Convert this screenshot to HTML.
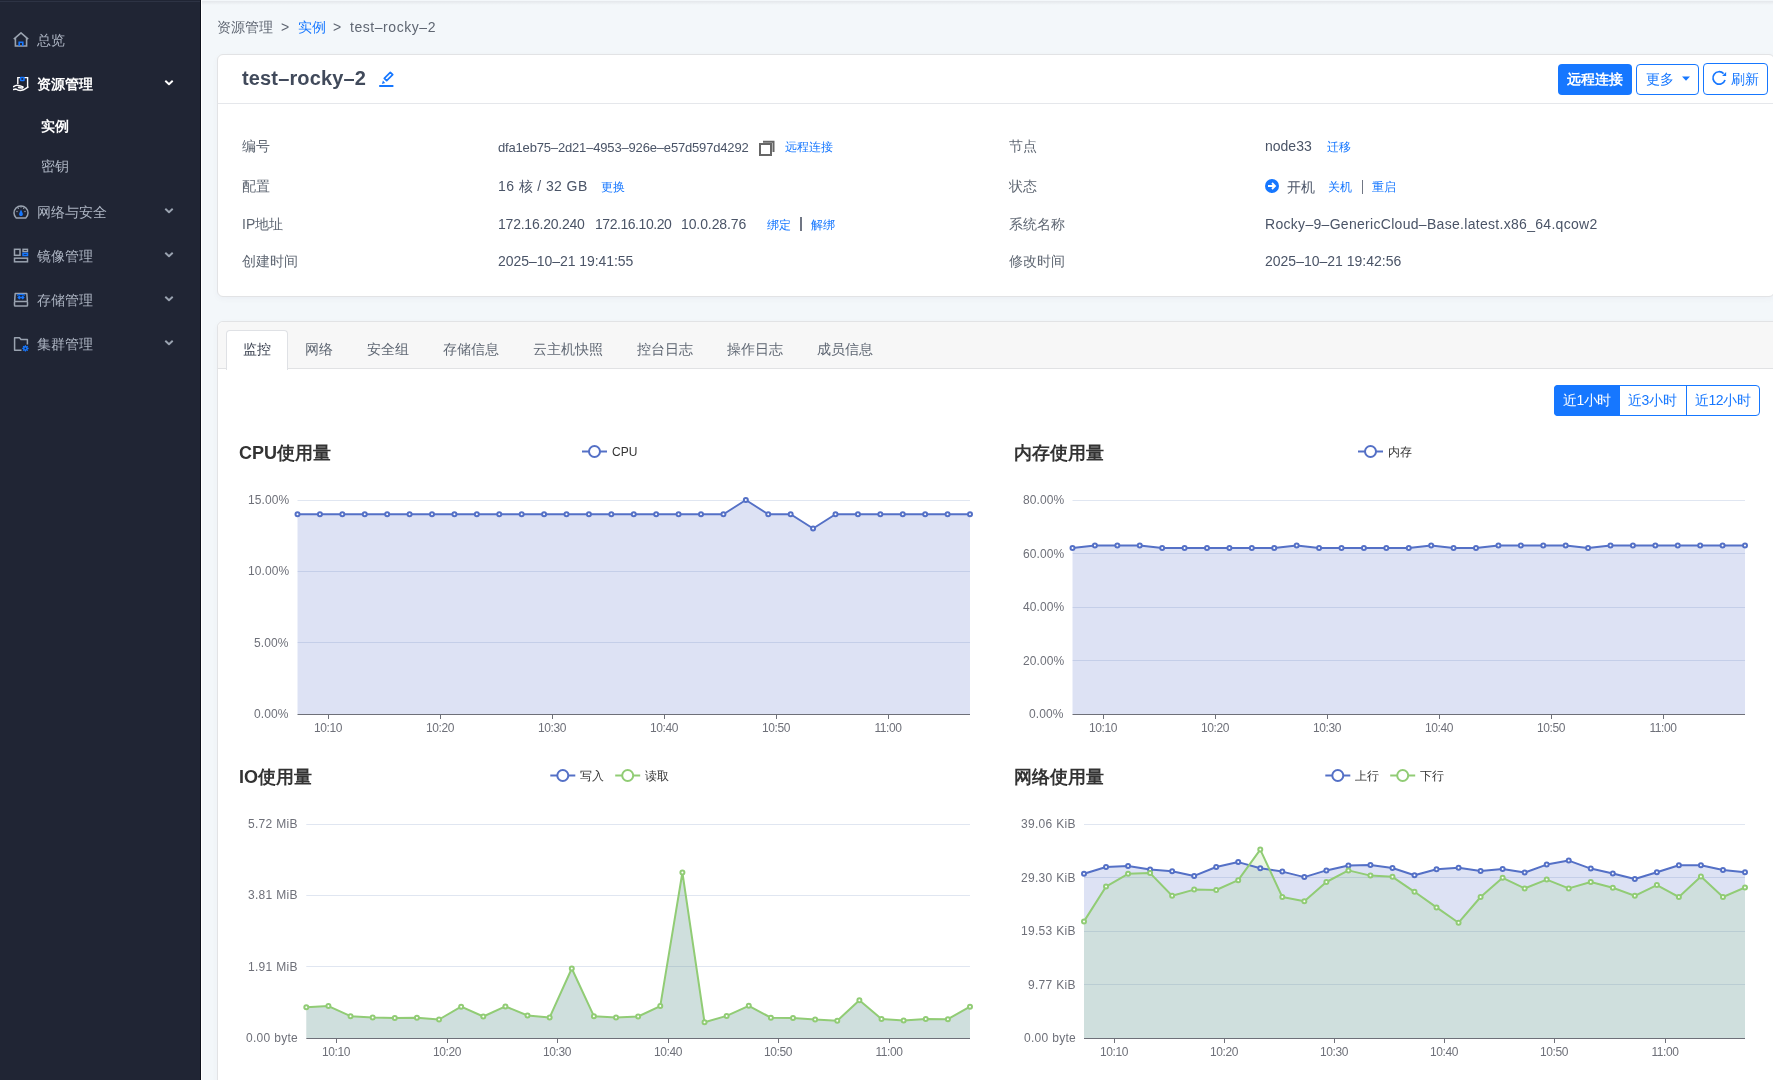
<!DOCTYPE html>
<html><head><meta charset="utf-8"><title>test-rocky-2</title>
<style>
html,body{margin:0;padding:0;width:1773px;height:1080px;overflow:hidden;background:#f3f7fa;font-family:"Liberation Sans", sans-serif;}
.t{position:absolute;white-space:nowrap;will-change:transform;}
#sb{position:absolute;left:0;top:0;width:200px;height:1080px;background:#202534;}
.card{position:absolute;background:#fff;border:1px solid #e2e3e5;border-radius:6px;box-sizing:border-box;box-shadow:0 2px 6px rgba(20,40,80,0.035);}
.btn{position:absolute;}
</style></head><body>
<div id="sb"></div>
<div style="position:absolute;left:0;top:1px;width:200px;height:1px;background:#2d3344"></div>
<div style="position:absolute;left:200px;top:0;width:1px;height:1080px;background:#0d111c"></div>
<div style="position:absolute;left:201px;top:0;width:1px;height:1080px;background:#ffffff"></div>
<svg style="position:absolute;left:13px;top:32px" width="16" height="16" viewBox="0 0 16 16"><path d="M0.8 7.2 L8 0.9 L15.2 7.2" fill="none" stroke="#9aa3b0" stroke-width="1.6" stroke-linejoin="miter"/><path d="M2.4 6 V14 H13.6 V6" fill="none" stroke="#9aa3b0" stroke-width="1.6"/><path d="M6.2 14 V10.2 H9.8 V14" fill="none" stroke="#1677ff" stroke-width="1.6"/></svg>
<div class="t" style="left:37px;top:30.00px;font-size:14px;line-height:20px;color:#adb5c3;font-weight:normal;">总览</div>
<svg style="position:absolute;left:13px;top:76px" width="16" height="16" viewBox="0 0 16 16"><path d="M4.8 8 V1.6 H14.6 V11" fill="none" stroke="#ffffff" stroke-width="1.4"/><rect x="6.8" y="0.8" width="5" height="4.4" rx="1.2" fill="#1677ff"/><rect x="8.4" y="2.2" width="1.8" height="1.6" fill="#1f2432"/><path d="M0.6 10.6 C2.5 9.2 4.5 8.8 6.5 9.8 L9.5 10.6 C10.5 11 9.8 12.2 8.5 12 L5.5 11.6 M0.6 13.6 L3 13 C5 14.6 8 14.8 10.5 13.8 L15 11.2" fill="none" stroke="#ffffff" stroke-width="1.5" stroke-linecap="round" stroke-linejoin="round"/></svg>
<div class="t" style="left:37px;top:74.00px;font-size:14px;line-height:20px;color:#ffffff;font-weight:bold;">资源管理</div>
<svg style="position:absolute;left:164px;top:79px" width="10" height="8" viewBox="0 0 10 8"><path d="M1.3 1.8 L5 5.3 L8.7 1.8" fill="none" stroke="#ffffff" stroke-width="1.9" stroke-linejoin="round"/></svg>
<svg style="position:absolute;left:13px;top:204px" width="16" height="16" viewBox="0 0 16 16"><path d="M3.2 14 A7 7 0 1 1 12.8 14 Z" fill="none" stroke="#9aa3b0" stroke-width="1.5" stroke-linejoin="round"/><path d="M8 5.6 L9.7 9.3 A1.9 1.9 0 1 1 6.3 9.3 Z" fill="#1677ff"/><circle cx="4" cy="7.5" r="0.7" fill="#9aa3b0"/><circle cx="12" cy="7.5" r="0.7" fill="#9aa3b0"/><circle cx="5.3" cy="4.2" r="0.7" fill="#9aa3b0"/><circle cx="10.7" cy="4.2" r="0.7" fill="#9aa3b0"/><circle cx="8" cy="3" r="0.7" fill="#9aa3b0"/></svg>
<div class="t" style="left:37px;top:202.00px;font-size:14px;line-height:20px;color:#adb5c3;font-weight:normal;">网络与安全</div>
<svg style="position:absolute;left:164px;top:207px" width="10" height="8" viewBox="0 0 10 8"><path d="M1.3 1.8 L5 5.3 L8.7 1.8" fill="none" stroke="#9aa3b0" stroke-width="1.9" stroke-linejoin="round"/></svg>
<svg style="position:absolute;left:13px;top:248px" width="16" height="16" viewBox="0 0 16 16"><rect x="1.5" y="1.3" width="5.5" height="6" fill="none" stroke="#9aa3b0" stroke-width="1.5"/><rect x="1.5" y="10.2" width="13" height="3.6" fill="none" stroke="#9aa3b0" stroke-width="1.5"/><rect x="10" y="1.3" width="4.5" height="2.2" fill="none" stroke="#9aa3b0" stroke-width="1.4"/><rect x="10" y="5.3" width="4.5" height="2.2" fill="none" stroke="#1677ff" stroke-width="1.5"/></svg>
<div class="t" style="left:37px;top:246.00px;font-size:14px;line-height:20px;color:#adb5c3;font-weight:normal;">镜像管理</div>
<svg style="position:absolute;left:164px;top:251px" width="10" height="8" viewBox="0 0 10 8"><path d="M1.3 1.8 L5 5.3 L8.7 1.8" fill="none" stroke="#9aa3b0" stroke-width="1.9" stroke-linejoin="round"/></svg>
<svg style="position:absolute;left:13px;top:292px" width="16" height="16" viewBox="0 0 16 16"><path d="M1.6 9.5 L2.2 1.5 H13.8 L14.4 9.5" fill="none" stroke="#9aa3b0" stroke-width="1.5" stroke-linejoin="round"/><rect x="1.5" y="9.5" width="13" height="4.6" rx="0.8" fill="none" stroke="#9aa3b0" stroke-width="1.5"/><path d="M5.3 5.5 H10.7 M6.8 4 L5.3 5.5 L6.8 7 M9.2 4 L10.7 5.5 L9.2 7" fill="none" stroke="#1677ff" stroke-width="1.4"/><path d="M4 3.2 C6 2.3 10 2.3 12 3.2" fill="none" stroke="#1677ff" stroke-width="1.2"/></svg>
<div class="t" style="left:37px;top:290.00px;font-size:14px;line-height:20px;color:#adb5c3;font-weight:normal;">存储管理</div>
<svg style="position:absolute;left:164px;top:295px" width="10" height="8" viewBox="0 0 10 8"><path d="M1.3 1.8 L5 5.3 L8.7 1.8" fill="none" stroke="#9aa3b0" stroke-width="1.9" stroke-linejoin="round"/></svg>
<svg style="position:absolute;left:13px;top:336px" width="16" height="16" viewBox="0 0 16 16"><path d="M8.5 14.2 H1.6 V1.8 H6.5 L8 3.6 H14.4 V8.5" fill="none" stroke="#9aa3b0" stroke-width="1.5" stroke-linejoin="round"/><circle cx="12.4" cy="12.4" r="2.3" fill="#1677ff"/><circle cx="12.4" cy="12.4" r="0.8" fill="#1f2432"/><path d="M12.4 9.2 V15.6 M9.2 12.4 H15.6 M10.1 10.1 L14.7 14.7 M14.7 10.1 L10.1 14.7" stroke="#1677ff" stroke-width="1.2"/><circle cx="12.4" cy="12.4" r="0.9" fill="#1f2432"/></svg>
<div class="t" style="left:37px;top:334.00px;font-size:14px;line-height:20px;color:#adb5c3;font-weight:normal;">集群管理</div>
<svg style="position:absolute;left:164px;top:339px" width="10" height="8" viewBox="0 0 10 8"><path d="M1.3 1.8 L5 5.3 L8.7 1.8" fill="none" stroke="#9aa3b0" stroke-width="1.9" stroke-linejoin="round"/></svg>
<div class="t" style="left:41px;top:116.00px;font-size:14px;line-height:20px;color:#ffffff;font-weight:bold;">实例</div>
<div class="t" style="left:41px;top:156.00px;font-size:14px;line-height:20px;color:#adb5c3;font-weight:normal;">密钥</div>
<div style="position:absolute;left:202px;top:1px;width:1571px;height:4px;background:linear-gradient(#e4e7eb,#f3f7fa)"></div>
<div class="t" style="left:217.2px;top:17.00px;font-size:14px;line-height:20px;color:#5f6672;font-weight:normal;">资源管理</div>
<div class="t" style="left:281px;top:17.00px;font-size:14px;line-height:20px;color:#5f6672;font-weight:normal;">&gt;</div>
<div class="t" style="left:298px;top:17.00px;font-size:14px;line-height:20px;color:#1677ff;font-weight:normal;">实例</div>
<div class="t" style="left:333px;top:17.00px;font-size:14px;line-height:20px;color:#5f6672;font-weight:normal;">&gt;</div>
<div class="t" style="left:350px;top:17.00px;font-size:14px;line-height:20px;color:#5f6672;font-weight:normal;letter-spacing:0.55px">test–rocky–2</div>
<div class="card" style="left:217px;top:54px;width:1558px;height:243px"></div>
<div style="position:absolute;left:218px;top:103px;width:1555px;height:1px;background:#e5e7eb"></div>
<div class="t" style="left:242px;top:64.00px;font-size:20px;line-height:28px;color:#414a5b;font-weight:bold;letter-spacing:0.15px">test–rocky–2</div>
<svg style="position:absolute;left:378px;top:71px" width="17" height="17" viewBox="0 0 17 17"><polygon points="6.3,7.3 12.3,1.3 14.7,3.7 8.7,9.7" fill="none" stroke="#1677ff" stroke-width="1.7" stroke-linejoin="round"/><path d="M3.9 12.9 L4.9 9.6 L7.2 11.9 Z" fill="#1677ff"/><path d="M1.2 15 H15.4" stroke="#1677ff" stroke-width="2"/></svg>
<div class="btn" style="left:1558px;top:64px;width:74px;height:31px;background:#1677ff;border-radius:4px"></div>
<div class="t" style="left:1567px;top:68.70px;font-size:14px;line-height:20px;color:#fff;font-weight:bold;">远程连接</div>
<div class="btn" style="left:1636px;top:64px;width:61px;height:29px;border:1px solid #1677ff;border-radius:4px"></div>
<div class="t" style="left:1646px;top:68.70px;font-size:14px;line-height:20px;color:#1677ff;font-weight:normal;">更多</div>
<svg style="position:absolute;left:1681px;top:76px" width="10" height="6"><path d="M1 0.5 H9 L5 4.8 Z" fill="#1677ff"/></svg>
<div class="btn" style="left:1703px;top:63px;width:63px;height:30px;border:1px solid #1677ff;border-radius:4px"></div>
<svg style="position:absolute;left:1711px;top:70px" width="17" height="17" viewBox="0 0 17 17"><path d="M14.03 9.92 A6.2 6.2 0 1 1 12.6 3.6" fill="none" stroke="#1677ff" stroke-width="1.7"/><polygon points="15.1,5.9 11.1,5.9 15.1,1.9" fill="#1677ff"/></svg>
<div class="t" style="left:1731px;top:68.70px;font-size:14px;line-height:20px;color:#1677ff;font-weight:normal;">刷新</div>
<div class="t" style="left:242px;top:135.50px;font-size:14px;line-height:20px;color:#5f6773;font-weight:normal;">编号</div>
<div class="t" style="left:242px;top:175.50px;font-size:14px;line-height:20px;color:#5f6773;font-weight:normal;">配置</div>
<div class="t" style="left:242px;top:213.80px;font-size:14px;line-height:20px;color:#5f6773;font-weight:normal;">IP地址</div>
<div class="t" style="left:242px;top:250.50px;font-size:14px;line-height:20px;color:#5f6773;font-weight:normal;">创建时间</div>
<div class="t" style="left:498px;top:137.50px;font-size:13px;line-height:19px;color:#4a5467;font-weight:normal;letter-spacing:-0.17px">dfa1eb75–2d21–4953–926e–e57d597d4292</div>
<svg style="position:absolute;left:758px;top:139px" width="18" height="18" viewBox="0 0 18 18"><rect x="2" y="5" width="11" height="11" fill="none" stroke="#666" stroke-width="2"/><path d="M5 2.8 H15.5 V13" fill="none" stroke="#666" stroke-width="2"/></svg>
<div class="t" style="left:785px;top:138.00px;font-size:12px;line-height:18px;color:#1677ff;font-weight:normal;">远程连接</div>
<div class="t" style="left:498px;top:176.00px;font-size:14px;line-height:20px;color:#4a5467;font-weight:normal;letter-spacing:0.4px">16 核 / 32 GB</div>
<div class="t" style="left:601px;top:177.50px;font-size:12px;line-height:18px;color:#1677ff;font-weight:normal;">更换</div>
<div class="t" style="left:498px;top:214.00px;font-size:14px;line-height:20px;color:#4a5467;font-weight:normal;letter-spacing:-0.22px">172.16.20.240</div>
<div class="t" style="left:594.6px;top:214.00px;font-size:14px;line-height:20px;color:#4a5467;font-weight:normal;letter-spacing:-0.45px">172.16.10.20</div>
<div class="t" style="left:680.5px;top:214.00px;font-size:14px;line-height:20px;color:#4a5467;font-weight:normal;letter-spacing:-0.1px">10.0.28.76</div>
<div class="t" style="left:767px;top:215.50px;font-size:12px;line-height:18px;color:#1677ff;font-weight:normal;">绑定</div>
<div style="position:absolute;left:800px;top:217px;width:1.5px;height:14px;background:#707684"></div>
<div class="t" style="left:811px;top:215.50px;font-size:12px;line-height:18px;color:#1677ff;font-weight:normal;">解绑</div>
<div class="t" style="left:498px;top:251.00px;font-size:14px;line-height:20px;color:#4a5467;font-weight:normal;letter-spacing:-0.05px">2025–10–21 19:41:55</div>
<div class="t" style="left:1009px;top:135.50px;font-size:14px;line-height:20px;color:#5f6773;font-weight:normal;">节点</div>
<div class="t" style="left:1009px;top:175.50px;font-size:14px;line-height:20px;color:#5f6773;font-weight:normal;">状态</div>
<div class="t" style="left:1009px;top:213.50px;font-size:14px;line-height:20px;color:#5f6773;font-weight:normal;">系统名称</div>
<div class="t" style="left:1009px;top:250.50px;font-size:14px;line-height:20px;color:#5f6773;font-weight:normal;">修改时间</div>
<div class="t" style="left:1265px;top:136.00px;font-size:14px;line-height:20px;color:#4a5467;font-weight:normal;">node33</div>
<div class="t" style="left:1327px;top:137.50px;font-size:12px;line-height:18px;color:#1677ff;font-weight:normal;">迁移</div>
<svg style="position:absolute;left:1264px;top:178px" width="16" height="16" viewBox="0 0 16 16"><circle cx="8" cy="8" r="7" fill="#1677ff"/><path d="M4 8 H11 M8 5 L11 8 L8 11" fill="none" stroke="#fff" stroke-width="1.8"/></svg>
<div class="t" style="left:1287px;top:176.50px;font-size:14px;line-height:20px;color:#4a5467;font-weight:normal;">开机</div>
<div class="t" style="left:1328px;top:178.00px;font-size:12px;line-height:18px;color:#1677ff;font-weight:normal;">关机</div>
<div style="position:absolute;left:1361.5px;top:180px;width:1.5px;height:14px;background:#707684"></div>
<div class="t" style="left:1372px;top:178.00px;font-size:12px;line-height:18px;color:#1677ff;font-weight:normal;">重启</div>
<div class="t" style="left:1265px;top:214.00px;font-size:14px;line-height:20px;color:#4a5467;font-weight:normal;letter-spacing:0.3px">Rocky–9–GenericCloud–Base.latest.x86_64.qcow2</div>
<div class="t" style="left:1265px;top:251.00px;font-size:14px;line-height:20px;color:#4a5467;font-weight:normal;">2025–10–21 19:42:56</div>
<div class="card" style="left:217px;top:321px;width:1570px;height:800px"></div>
<div style="position:absolute;left:218px;top:322px;width:1555px;height:46px;background:#f7f7f7;border-radius:6px 0 0 0"></div>
<div style="position:absolute;left:218px;top:368px;width:1555px;height:1px;background:#e1e2e4"></div>
<div style="position:absolute;left:226px;top:330px;width:60px;height:39px;background:#fff;border:1px solid #dfe1e5;border-bottom:none;border-radius:4px 4px 0 0"></div>
<div class="t" style="left:243px;top:338.50px;font-size:14px;line-height:20px;color:#3a4150;font-weight:normal;">监控</div>
<div class="t" style="left:304.5px;top:338.50px;font-size:14px;line-height:20px;color:#5f6773;font-weight:normal;">网络</div>
<div class="t" style="left:366.5px;top:338.50px;font-size:14px;line-height:20px;color:#5f6773;font-weight:normal;">安全组</div>
<div class="t" style="left:442.5px;top:338.50px;font-size:14px;line-height:20px;color:#5f6773;font-weight:normal;">存储信息</div>
<div class="t" style="left:532.5px;top:338.50px;font-size:14px;line-height:20px;color:#5f6773;font-weight:normal;">云主机快照</div>
<div class="t" style="left:636.5px;top:338.50px;font-size:14px;line-height:20px;color:#5f6773;font-weight:normal;">控台日志</div>
<div class="t" style="left:726.5px;top:338.50px;font-size:14px;line-height:20px;color:#5f6773;font-weight:normal;">操作日志</div>
<div class="t" style="left:816.5px;top:338.50px;font-size:14px;line-height:20px;color:#5f6773;font-weight:normal;">成员信息</div>
<div class="btn" style="left:1554px;top:385px;width:204px;height:29px;border:1px solid #1677ff;border-radius:4px"></div>
<div class="btn" style="left:1554px;top:385px;width:66px;height:31px;background:#1677ff;border-radius:4px 0 0 4px"></div>
<div style="position:absolute;left:1686px;top:385px;width:1px;height:31px;background:#1677ff"></div>
<div class="t" style="left:1563px;top:389.80px;font-size:14px;line-height:20px;color:#fff;font-weight:normal;letter-spacing:-0.6px">近1小时</div>
<div class="t" style="left:1628px;top:389.80px;font-size:14px;line-height:20px;color:#1677ff;font-weight:normal;letter-spacing:-0.4px">近3小时</div>
<div class="t" style="left:1695px;top:389.80px;font-size:14px;line-height:20px;color:#1677ff;font-weight:normal;letter-spacing:-0.5px">近12小时</div>
<div class="t" style="right:1484px;top:493.00px;font-size:12px;line-height:14px;color:#6E7079;text-align:right;letter-spacing:0.1px">15.00%</div>
<div class="t" style="right:1484px;top:564.33px;font-size:12px;line-height:14px;color:#6E7079;text-align:right;letter-spacing:0.1px">10.00%</div>
<div class="t" style="right:1484px;top:635.67px;font-size:12px;line-height:14px;color:#6E7079;text-align:right;letter-spacing:0.1px">5.00%</div>
<div class="t" style="right:1484px;top:707.00px;font-size:12px;line-height:14px;color:#6E7079;text-align:right;letter-spacing:0.1px">0.00%</div>
<div class="t" style="left:287.50px;width:80px;top:720.50px;font-size:12px;line-height:14px;color:#6E7079;text-align:center;letter-spacing:-0.4px">10:10</div>
<div class="t" style="left:399.50px;width:80px;top:720.50px;font-size:12px;line-height:14px;color:#6E7079;text-align:center;letter-spacing:-0.4px">10:20</div>
<div class="t" style="left:511.50px;width:80px;top:720.50px;font-size:12px;line-height:14px;color:#6E7079;text-align:center;letter-spacing:-0.4px">10:30</div>
<div class="t" style="left:623.50px;width:80px;top:720.50px;font-size:12px;line-height:14px;color:#6E7079;text-align:center;letter-spacing:-0.4px">10:40</div>
<div class="t" style="left:735.50px;width:80px;top:720.50px;font-size:12px;line-height:14px;color:#6E7079;text-align:center;letter-spacing:-0.4px">10:50</div>
<div class="t" style="left:847.50px;width:80px;top:720.50px;font-size:12px;line-height:14px;color:#6E7079;text-align:center;letter-spacing:-0.4px">11:00</div>
<div class="t" style="left:239px;top:441.00px;font-size:18px;line-height:24px;color:#333;font-weight:bold;">CPU使用量</div>
<div class="t" style="left:612px;top:444.50px;font-size:12px;line-height:14px;color:#333;font-weight:normal;">CPU</div>
<div class="t" style="right:709px;top:493.00px;font-size:12px;line-height:14px;color:#6E7079;text-align:right;letter-spacing:0.1px">80.00%</div>
<div class="t" style="right:709px;top:546.50px;font-size:12px;line-height:14px;color:#6E7079;text-align:right;letter-spacing:0.1px">60.00%</div>
<div class="t" style="right:709px;top:600.00px;font-size:12px;line-height:14px;color:#6E7079;text-align:right;letter-spacing:0.1px">40.00%</div>
<div class="t" style="right:709px;top:653.50px;font-size:12px;line-height:14px;color:#6E7079;text-align:right;letter-spacing:0.1px">20.00%</div>
<div class="t" style="right:709px;top:707.00px;font-size:12px;line-height:14px;color:#6E7079;text-align:right;letter-spacing:0.1px">0.00%</div>
<div class="t" style="left:1062.50px;width:80px;top:720.50px;font-size:12px;line-height:14px;color:#6E7079;text-align:center;letter-spacing:-0.4px">10:10</div>
<div class="t" style="left:1174.50px;width:80px;top:720.50px;font-size:12px;line-height:14px;color:#6E7079;text-align:center;letter-spacing:-0.4px">10:20</div>
<div class="t" style="left:1286.50px;width:80px;top:720.50px;font-size:12px;line-height:14px;color:#6E7079;text-align:center;letter-spacing:-0.4px">10:30</div>
<div class="t" style="left:1398.50px;width:80px;top:720.50px;font-size:12px;line-height:14px;color:#6E7079;text-align:center;letter-spacing:-0.4px">10:40</div>
<div class="t" style="left:1510.50px;width:80px;top:720.50px;font-size:12px;line-height:14px;color:#6E7079;text-align:center;letter-spacing:-0.4px">10:50</div>
<div class="t" style="left:1622.50px;width:80px;top:720.50px;font-size:12px;line-height:14px;color:#6E7079;text-align:center;letter-spacing:-0.4px">11:00</div>
<div class="t" style="left:1014px;top:441.00px;font-size:18px;line-height:24px;color:#333;font-weight:bold;">内存使用量</div>
<div class="t" style="left:1388px;top:444.50px;font-size:12px;line-height:14px;color:#333;font-weight:normal;">内存</div>
<div class="t" style="right:1475px;top:817.00px;font-size:12px;line-height:14px;color:#6E7079;text-align:right;letter-spacing:0.3px">5.72 MiB</div>
<div class="t" style="right:1475px;top:888.33px;font-size:12px;line-height:14px;color:#6E7079;text-align:right;letter-spacing:0.3px">3.81 MiB</div>
<div class="t" style="right:1475px;top:959.67px;font-size:12px;line-height:14px;color:#6E7079;text-align:right;letter-spacing:0.3px">1.91 MiB</div>
<div class="t" style="right:1475px;top:1031.00px;font-size:12px;line-height:14px;color:#6E7079;text-align:right;letter-spacing:0.3px">0.00 byte</div>
<div class="t" style="left:295.50px;width:80px;top:1044.50px;font-size:12px;line-height:14px;color:#6E7079;text-align:center;letter-spacing:-0.4px">10:10</div>
<div class="t" style="left:406.50px;width:80px;top:1044.50px;font-size:12px;line-height:14px;color:#6E7079;text-align:center;letter-spacing:-0.4px">10:20</div>
<div class="t" style="left:516.50px;width:80px;top:1044.50px;font-size:12px;line-height:14px;color:#6E7079;text-align:center;letter-spacing:-0.4px">10:30</div>
<div class="t" style="left:627.50px;width:80px;top:1044.50px;font-size:12px;line-height:14px;color:#6E7079;text-align:center;letter-spacing:-0.4px">10:40</div>
<div class="t" style="left:737.50px;width:80px;top:1044.50px;font-size:12px;line-height:14px;color:#6E7079;text-align:center;letter-spacing:-0.4px">10:50</div>
<div class="t" style="left:848.50px;width:80px;top:1044.50px;font-size:12px;line-height:14px;color:#6E7079;text-align:center;letter-spacing:-0.4px">11:00</div>
<div class="t" style="left:239px;top:765.00px;font-size:18px;line-height:24px;color:#333;font-weight:bold;">IO使用量</div>
<div class="t" style="left:580.3px;top:768.50px;font-size:12px;line-height:14px;color:#333;font-weight:normal;">写入</div>
<div class="t" style="left:645.2px;top:768.50px;font-size:12px;line-height:14px;color:#333;font-weight:normal;">读取</div>
<div class="t" style="right:697px;top:817.00px;font-size:12px;line-height:14px;color:#6E7079;text-align:right;letter-spacing:0.3px">39.06 KiB</div>
<div class="t" style="right:697px;top:870.50px;font-size:12px;line-height:14px;color:#6E7079;text-align:right;letter-spacing:0.3px">29.30 KiB</div>
<div class="t" style="right:697px;top:924.00px;font-size:12px;line-height:14px;color:#6E7079;text-align:right;letter-spacing:0.3px">19.53 KiB</div>
<div class="t" style="right:697px;top:977.50px;font-size:12px;line-height:14px;color:#6E7079;text-align:right;letter-spacing:0.3px">9.77 KiB</div>
<div class="t" style="right:697px;top:1031.00px;font-size:12px;line-height:14px;color:#6E7079;text-align:right;letter-spacing:0.3px">0.00 byte</div>
<div class="t" style="left:1073.50px;width:80px;top:1044.50px;font-size:12px;line-height:14px;color:#6E7079;text-align:center;letter-spacing:-0.4px">10:10</div>
<div class="t" style="left:1183.50px;width:80px;top:1044.50px;font-size:12px;line-height:14px;color:#6E7079;text-align:center;letter-spacing:-0.4px">10:20</div>
<div class="t" style="left:1293.50px;width:80px;top:1044.50px;font-size:12px;line-height:14px;color:#6E7079;text-align:center;letter-spacing:-0.4px">10:30</div>
<div class="t" style="left:1403.50px;width:80px;top:1044.50px;font-size:12px;line-height:14px;color:#6E7079;text-align:center;letter-spacing:-0.4px">10:40</div>
<div class="t" style="left:1513.50px;width:80px;top:1044.50px;font-size:12px;line-height:14px;color:#6E7079;text-align:center;letter-spacing:-0.4px">10:50</div>
<div class="t" style="left:1624.50px;width:80px;top:1044.50px;font-size:12px;line-height:14px;color:#6E7079;text-align:center;letter-spacing:-0.4px">11:00</div>
<div class="t" style="left:1014px;top:765.00px;font-size:18px;line-height:24px;color:#333;font-weight:bold;">网络使用量</div>
<div class="t" style="left:1355.3px;top:768.50px;font-size:12px;line-height:14px;color:#333;font-weight:normal;">上行</div>
<div class="t" style="left:1420.2px;top:768.50px;font-size:12px;line-height:14px;color:#333;font-weight:normal;">下行</div>

<svg style="position:absolute;left:0;top:0" width="1773" height="1080" viewBox="0 0 1773 1080">
<line x1="297.5" x2="970" y1="500.5" y2="500.5" stroke="#E0E6F1" stroke-width="1"/>
<line x1="297.5" x2="970" y1="571.5" y2="571.5" stroke="#E0E6F1" stroke-width="1"/>
<line x1="297.5" x2="970" y1="642.5" y2="642.5" stroke="#E0E6F1" stroke-width="1"/>
<polygon points="297.50,714 297.50,514.27 319.92,514.27 342.33,514.27 364.75,514.27 387.17,514.27 409.58,514.27 432.00,514.27 454.42,514.27 476.83,514.27 499.25,514.27 521.67,514.27 544.08,514.27 566.50,514.27 588.92,514.27 611.33,514.27 633.75,514.27 656.17,514.27 678.58,514.27 701.00,514.27 723.42,514.27 745.83,500.00 768.25,514.27 790.67,514.27 813.08,528.53 835.50,514.27 857.92,514.27 880.33,514.27 902.75,514.27 925.17,514.27 947.58,514.27 970.00,514.27 970.00,714" fill="#5470c6" fill-opacity="0.2"/>
<polyline points="297.50,514.27 319.92,514.27 342.33,514.27 364.75,514.27 387.17,514.27 409.58,514.27 432.00,514.27 454.42,514.27 476.83,514.27 499.25,514.27 521.67,514.27 544.08,514.27 566.50,514.27 588.92,514.27 611.33,514.27 633.75,514.27 656.17,514.27 678.58,514.27 701.00,514.27 723.42,514.27 745.83,500.00 768.25,514.27 790.67,514.27 813.08,528.53 835.50,514.27 857.92,514.27 880.33,514.27 902.75,514.27 925.17,514.27 947.58,514.27 970.00,514.27" fill="none" stroke="#5470c6" stroke-width="2" stroke-linejoin="bevel"/>
<circle cx="297.50" cy="514.27" r="2" fill="#fff" stroke="#5470c6" stroke-width="2"/>
<circle cx="319.92" cy="514.27" r="2" fill="#fff" stroke="#5470c6" stroke-width="2"/>
<circle cx="342.33" cy="514.27" r="2" fill="#fff" stroke="#5470c6" stroke-width="2"/>
<circle cx="364.75" cy="514.27" r="2" fill="#fff" stroke="#5470c6" stroke-width="2"/>
<circle cx="387.17" cy="514.27" r="2" fill="#fff" stroke="#5470c6" stroke-width="2"/>
<circle cx="409.58" cy="514.27" r="2" fill="#fff" stroke="#5470c6" stroke-width="2"/>
<circle cx="432.00" cy="514.27" r="2" fill="#fff" stroke="#5470c6" stroke-width="2"/>
<circle cx="454.42" cy="514.27" r="2" fill="#fff" stroke="#5470c6" stroke-width="2"/>
<circle cx="476.83" cy="514.27" r="2" fill="#fff" stroke="#5470c6" stroke-width="2"/>
<circle cx="499.25" cy="514.27" r="2" fill="#fff" stroke="#5470c6" stroke-width="2"/>
<circle cx="521.67" cy="514.27" r="2" fill="#fff" stroke="#5470c6" stroke-width="2"/>
<circle cx="544.08" cy="514.27" r="2" fill="#fff" stroke="#5470c6" stroke-width="2"/>
<circle cx="566.50" cy="514.27" r="2" fill="#fff" stroke="#5470c6" stroke-width="2"/>
<circle cx="588.92" cy="514.27" r="2" fill="#fff" stroke="#5470c6" stroke-width="2"/>
<circle cx="611.33" cy="514.27" r="2" fill="#fff" stroke="#5470c6" stroke-width="2"/>
<circle cx="633.75" cy="514.27" r="2" fill="#fff" stroke="#5470c6" stroke-width="2"/>
<circle cx="656.17" cy="514.27" r="2" fill="#fff" stroke="#5470c6" stroke-width="2"/>
<circle cx="678.58" cy="514.27" r="2" fill="#fff" stroke="#5470c6" stroke-width="2"/>
<circle cx="701.00" cy="514.27" r="2" fill="#fff" stroke="#5470c6" stroke-width="2"/>
<circle cx="723.42" cy="514.27" r="2" fill="#fff" stroke="#5470c6" stroke-width="2"/>
<circle cx="745.83" cy="500.00" r="2" fill="#fff" stroke="#5470c6" stroke-width="2"/>
<circle cx="768.25" cy="514.27" r="2" fill="#fff" stroke="#5470c6" stroke-width="2"/>
<circle cx="790.67" cy="514.27" r="2" fill="#fff" stroke="#5470c6" stroke-width="2"/>
<circle cx="813.08" cy="528.53" r="2" fill="#fff" stroke="#5470c6" stroke-width="2"/>
<circle cx="835.50" cy="514.27" r="2" fill="#fff" stroke="#5470c6" stroke-width="2"/>
<circle cx="857.92" cy="514.27" r="2" fill="#fff" stroke="#5470c6" stroke-width="2"/>
<circle cx="880.33" cy="514.27" r="2" fill="#fff" stroke="#5470c6" stroke-width="2"/>
<circle cx="902.75" cy="514.27" r="2" fill="#fff" stroke="#5470c6" stroke-width="2"/>
<circle cx="925.17" cy="514.27" r="2" fill="#fff" stroke="#5470c6" stroke-width="2"/>
<circle cx="947.58" cy="514.27" r="2" fill="#fff" stroke="#5470c6" stroke-width="2"/>
<circle cx="970.00" cy="514.27" r="2" fill="#fff" stroke="#5470c6" stroke-width="2"/>
<line x1="297.5" x2="970" y1="714.5" y2="714.5" stroke="#6E7079" stroke-width="1"/>
<line x1="328.5" x2="328.5" y1="714" y2="719" stroke="#6E7079" stroke-width="1"/>
<line x1="440.5" x2="440.5" y1="714" y2="719" stroke="#6E7079" stroke-width="1"/>
<line x1="552.5" x2="552.5" y1="714" y2="719" stroke="#6E7079" stroke-width="1"/>
<line x1="664.5" x2="664.5" y1="714" y2="719" stroke="#6E7079" stroke-width="1"/>
<line x1="776.5" x2="776.5" y1="714" y2="719" stroke="#6E7079" stroke-width="1"/>
<line x1="888.5" x2="888.5" y1="714" y2="719" stroke="#6E7079" stroke-width="1"/>
<line x1="582" x2="607" y1="451.5" y2="451.5" stroke="#5470c6" stroke-width="2"/>
<circle cx="594.5" cy="451.5" r="5.5" fill="#fff" stroke="#5470c6" stroke-width="2"/>
<line x1="1072.5" x2="1745" y1="500.5" y2="500.5" stroke="#E0E6F1" stroke-width="1"/>
<line x1="1072.5" x2="1745" y1="553.5" y2="553.5" stroke="#E0E6F1" stroke-width="1"/>
<line x1="1072.5" x2="1745" y1="607.5" y2="607.5" stroke="#E0E6F1" stroke-width="1"/>
<line x1="1072.5" x2="1745" y1="660.5" y2="660.5" stroke="#E0E6F1" stroke-width="1"/>
<polygon points="1072.50,714 1072.50,548.00 1094.92,545.40 1117.33,545.40 1139.75,545.40 1162.17,548.00 1184.58,548.00 1207.00,548.00 1229.42,548.00 1251.83,548.00 1274.25,548.00 1296.67,545.40 1319.08,548.00 1341.50,548.00 1363.92,548.00 1386.33,548.00 1408.75,548.00 1431.17,545.40 1453.58,548.00 1476.00,548.00 1498.42,545.40 1520.83,545.40 1543.25,545.40 1565.67,545.40 1588.08,548.00 1610.50,545.40 1632.92,545.40 1655.33,545.40 1677.75,545.40 1700.17,545.40 1722.58,545.40 1745.00,545.40 1745.00,714" fill="#5470c6" fill-opacity="0.2"/>
<polyline points="1072.50,548.00 1094.92,545.40 1117.33,545.40 1139.75,545.40 1162.17,548.00 1184.58,548.00 1207.00,548.00 1229.42,548.00 1251.83,548.00 1274.25,548.00 1296.67,545.40 1319.08,548.00 1341.50,548.00 1363.92,548.00 1386.33,548.00 1408.75,548.00 1431.17,545.40 1453.58,548.00 1476.00,548.00 1498.42,545.40 1520.83,545.40 1543.25,545.40 1565.67,545.40 1588.08,548.00 1610.50,545.40 1632.92,545.40 1655.33,545.40 1677.75,545.40 1700.17,545.40 1722.58,545.40 1745.00,545.40" fill="none" stroke="#5470c6" stroke-width="2" stroke-linejoin="bevel"/>
<circle cx="1072.50" cy="548.00" r="2" fill="#fff" stroke="#5470c6" stroke-width="2"/>
<circle cx="1094.92" cy="545.40" r="2" fill="#fff" stroke="#5470c6" stroke-width="2"/>
<circle cx="1117.33" cy="545.40" r="2" fill="#fff" stroke="#5470c6" stroke-width="2"/>
<circle cx="1139.75" cy="545.40" r="2" fill="#fff" stroke="#5470c6" stroke-width="2"/>
<circle cx="1162.17" cy="548.00" r="2" fill="#fff" stroke="#5470c6" stroke-width="2"/>
<circle cx="1184.58" cy="548.00" r="2" fill="#fff" stroke="#5470c6" stroke-width="2"/>
<circle cx="1207.00" cy="548.00" r="2" fill="#fff" stroke="#5470c6" stroke-width="2"/>
<circle cx="1229.42" cy="548.00" r="2" fill="#fff" stroke="#5470c6" stroke-width="2"/>
<circle cx="1251.83" cy="548.00" r="2" fill="#fff" stroke="#5470c6" stroke-width="2"/>
<circle cx="1274.25" cy="548.00" r="2" fill="#fff" stroke="#5470c6" stroke-width="2"/>
<circle cx="1296.67" cy="545.40" r="2" fill="#fff" stroke="#5470c6" stroke-width="2"/>
<circle cx="1319.08" cy="548.00" r="2" fill="#fff" stroke="#5470c6" stroke-width="2"/>
<circle cx="1341.50" cy="548.00" r="2" fill="#fff" stroke="#5470c6" stroke-width="2"/>
<circle cx="1363.92" cy="548.00" r="2" fill="#fff" stroke="#5470c6" stroke-width="2"/>
<circle cx="1386.33" cy="548.00" r="2" fill="#fff" stroke="#5470c6" stroke-width="2"/>
<circle cx="1408.75" cy="548.00" r="2" fill="#fff" stroke="#5470c6" stroke-width="2"/>
<circle cx="1431.17" cy="545.40" r="2" fill="#fff" stroke="#5470c6" stroke-width="2"/>
<circle cx="1453.58" cy="548.00" r="2" fill="#fff" stroke="#5470c6" stroke-width="2"/>
<circle cx="1476.00" cy="548.00" r="2" fill="#fff" stroke="#5470c6" stroke-width="2"/>
<circle cx="1498.42" cy="545.40" r="2" fill="#fff" stroke="#5470c6" stroke-width="2"/>
<circle cx="1520.83" cy="545.40" r="2" fill="#fff" stroke="#5470c6" stroke-width="2"/>
<circle cx="1543.25" cy="545.40" r="2" fill="#fff" stroke="#5470c6" stroke-width="2"/>
<circle cx="1565.67" cy="545.40" r="2" fill="#fff" stroke="#5470c6" stroke-width="2"/>
<circle cx="1588.08" cy="548.00" r="2" fill="#fff" stroke="#5470c6" stroke-width="2"/>
<circle cx="1610.50" cy="545.40" r="2" fill="#fff" stroke="#5470c6" stroke-width="2"/>
<circle cx="1632.92" cy="545.40" r="2" fill="#fff" stroke="#5470c6" stroke-width="2"/>
<circle cx="1655.33" cy="545.40" r="2" fill="#fff" stroke="#5470c6" stroke-width="2"/>
<circle cx="1677.75" cy="545.40" r="2" fill="#fff" stroke="#5470c6" stroke-width="2"/>
<circle cx="1700.17" cy="545.40" r="2" fill="#fff" stroke="#5470c6" stroke-width="2"/>
<circle cx="1722.58" cy="545.40" r="2" fill="#fff" stroke="#5470c6" stroke-width="2"/>
<circle cx="1745.00" cy="545.40" r="2" fill="#fff" stroke="#5470c6" stroke-width="2"/>
<line x1="1072.5" x2="1745" y1="714.5" y2="714.5" stroke="#6E7079" stroke-width="1"/>
<line x1="1103.5" x2="1103.5" y1="714" y2="719" stroke="#6E7079" stroke-width="1"/>
<line x1="1215.5" x2="1215.5" y1="714" y2="719" stroke="#6E7079" stroke-width="1"/>
<line x1="1327.5" x2="1327.5" y1="714" y2="719" stroke="#6E7079" stroke-width="1"/>
<line x1="1439.5" x2="1439.5" y1="714" y2="719" stroke="#6E7079" stroke-width="1"/>
<line x1="1551.5" x2="1551.5" y1="714" y2="719" stroke="#6E7079" stroke-width="1"/>
<line x1="1663.5" x2="1663.5" y1="714" y2="719" stroke="#6E7079" stroke-width="1"/>
<line x1="1358" x2="1383" y1="451.5" y2="451.5" stroke="#5470c6" stroke-width="2"/>
<circle cx="1370.5" cy="451.5" r="5.5" fill="#fff" stroke="#5470c6" stroke-width="2"/>
<line x1="306.3" x2="970" y1="824.5" y2="824.5" stroke="#E0E6F1" stroke-width="1"/>
<line x1="306.3" x2="970" y1="895.5" y2="895.5" stroke="#E0E6F1" stroke-width="1"/>
<line x1="306.3" x2="970" y1="966.5" y2="966.5" stroke="#E0E6F1" stroke-width="1"/>
<polygon points="306.30,1038 306.30,1007.30 328.42,1006.10 350.55,1016.20 372.67,1017.40 394.79,1018.00 416.92,1017.70 439.04,1019.50 461.16,1006.70 483.29,1016.50 505.41,1006.40 527.53,1015.50 549.66,1017.40 571.78,968.50 593.90,1016.20 616.03,1017.50 638.15,1016.50 660.27,1006.10 682.40,872.50 704.52,1022.30 726.64,1015.90 748.77,1005.80 770.89,1017.70 793.01,1018.00 815.14,1019.50 837.26,1020.70 859.38,1000.30 881.51,1018.90 903.63,1020.40 925.75,1018.90 947.88,1019.20 970.00,1006.70 970.00,1038" fill="#5470c6" fill-opacity="0.2"/>
<polygon points="306.30,1038 306.30,1007.30 328.42,1006.10 350.55,1016.20 372.67,1017.40 394.79,1018.00 416.92,1017.70 439.04,1019.50 461.16,1006.70 483.29,1016.50 505.41,1006.40 527.53,1015.50 549.66,1017.40 571.78,968.50 593.90,1016.20 616.03,1017.50 638.15,1016.50 660.27,1006.10 682.40,872.50 704.52,1022.30 726.64,1015.90 748.77,1005.80 770.89,1017.70 793.01,1018.00 815.14,1019.50 837.26,1020.70 859.38,1000.30 881.51,1018.90 903.63,1020.40 925.75,1018.90 947.88,1019.20 970.00,1006.70 970.00,1038" fill="#91cc75" fill-opacity="0.18"/>
<polyline points="306.30,1007.30 328.42,1006.10 350.55,1016.20 372.67,1017.40 394.79,1018.00 416.92,1017.70 439.04,1019.50 461.16,1006.70 483.29,1016.50 505.41,1006.40 527.53,1015.50 549.66,1017.40 571.78,968.50 593.90,1016.20 616.03,1017.50 638.15,1016.50 660.27,1006.10 682.40,872.50 704.52,1022.30 726.64,1015.90 748.77,1005.80 770.89,1017.70 793.01,1018.00 815.14,1019.50 837.26,1020.70 859.38,1000.30 881.51,1018.90 903.63,1020.40 925.75,1018.90 947.88,1019.20 970.00,1006.70" fill="none" stroke="#91cc75" stroke-width="2" stroke-linejoin="bevel"/>
<circle cx="306.30" cy="1007.30" r="2" fill="#fff" stroke="#91cc75" stroke-width="2"/>
<circle cx="328.42" cy="1006.10" r="2" fill="#fff" stroke="#91cc75" stroke-width="2"/>
<circle cx="350.55" cy="1016.20" r="2" fill="#fff" stroke="#91cc75" stroke-width="2"/>
<circle cx="372.67" cy="1017.40" r="2" fill="#fff" stroke="#91cc75" stroke-width="2"/>
<circle cx="394.79" cy="1018.00" r="2" fill="#fff" stroke="#91cc75" stroke-width="2"/>
<circle cx="416.92" cy="1017.70" r="2" fill="#fff" stroke="#91cc75" stroke-width="2"/>
<circle cx="439.04" cy="1019.50" r="2" fill="#fff" stroke="#91cc75" stroke-width="2"/>
<circle cx="461.16" cy="1006.70" r="2" fill="#fff" stroke="#91cc75" stroke-width="2"/>
<circle cx="483.29" cy="1016.50" r="2" fill="#fff" stroke="#91cc75" stroke-width="2"/>
<circle cx="505.41" cy="1006.40" r="2" fill="#fff" stroke="#91cc75" stroke-width="2"/>
<circle cx="527.53" cy="1015.50" r="2" fill="#fff" stroke="#91cc75" stroke-width="2"/>
<circle cx="549.66" cy="1017.40" r="2" fill="#fff" stroke="#91cc75" stroke-width="2"/>
<circle cx="571.78" cy="968.50" r="2" fill="#fff" stroke="#91cc75" stroke-width="2"/>
<circle cx="593.90" cy="1016.20" r="2" fill="#fff" stroke="#91cc75" stroke-width="2"/>
<circle cx="616.03" cy="1017.50" r="2" fill="#fff" stroke="#91cc75" stroke-width="2"/>
<circle cx="638.15" cy="1016.50" r="2" fill="#fff" stroke="#91cc75" stroke-width="2"/>
<circle cx="660.27" cy="1006.10" r="2" fill="#fff" stroke="#91cc75" stroke-width="2"/>
<circle cx="682.40" cy="872.50" r="2" fill="#fff" stroke="#91cc75" stroke-width="2"/>
<circle cx="704.52" cy="1022.30" r="2" fill="#fff" stroke="#91cc75" stroke-width="2"/>
<circle cx="726.64" cy="1015.90" r="2" fill="#fff" stroke="#91cc75" stroke-width="2"/>
<circle cx="748.77" cy="1005.80" r="2" fill="#fff" stroke="#91cc75" stroke-width="2"/>
<circle cx="770.89" cy="1017.70" r="2" fill="#fff" stroke="#91cc75" stroke-width="2"/>
<circle cx="793.01" cy="1018.00" r="2" fill="#fff" stroke="#91cc75" stroke-width="2"/>
<circle cx="815.14" cy="1019.50" r="2" fill="#fff" stroke="#91cc75" stroke-width="2"/>
<circle cx="837.26" cy="1020.70" r="2" fill="#fff" stroke="#91cc75" stroke-width="2"/>
<circle cx="859.38" cy="1000.30" r="2" fill="#fff" stroke="#91cc75" stroke-width="2"/>
<circle cx="881.51" cy="1018.90" r="2" fill="#fff" stroke="#91cc75" stroke-width="2"/>
<circle cx="903.63" cy="1020.40" r="2" fill="#fff" stroke="#91cc75" stroke-width="2"/>
<circle cx="925.75" cy="1018.90" r="2" fill="#fff" stroke="#91cc75" stroke-width="2"/>
<circle cx="947.88" cy="1019.20" r="2" fill="#fff" stroke="#91cc75" stroke-width="2"/>
<circle cx="970.00" cy="1006.70" r="2" fill="#fff" stroke="#91cc75" stroke-width="2"/>
<line x1="306.3" x2="970" y1="1038.5" y2="1038.5" stroke="#6E7079" stroke-width="1"/>
<line x1="336.5" x2="336.5" y1="1038" y2="1043" stroke="#6E7079" stroke-width="1"/>
<line x1="447.5" x2="447.5" y1="1038" y2="1043" stroke="#6E7079" stroke-width="1"/>
<line x1="557.5" x2="557.5" y1="1038" y2="1043" stroke="#6E7079" stroke-width="1"/>
<line x1="668.5" x2="668.5" y1="1038" y2="1043" stroke="#6E7079" stroke-width="1"/>
<line x1="778.5" x2="778.5" y1="1038" y2="1043" stroke="#6E7079" stroke-width="1"/>
<line x1="889.5" x2="889.5" y1="1038" y2="1043" stroke="#6E7079" stroke-width="1"/>
<line x1="550.3" x2="575.3" y1="775.5" y2="775.5" stroke="#5470c6" stroke-width="2"/>
<circle cx="562.8" cy="775.5" r="5.5" fill="#fff" stroke="#5470c6" stroke-width="2"/>
<line x1="615.2" x2="640.2" y1="775.5" y2="775.5" stroke="#91cc75" stroke-width="2"/>
<circle cx="627.7" cy="775.5" r="5.5" fill="#fff" stroke="#91cc75" stroke-width="2"/>
<line x1="1084" x2="1745" y1="824.5" y2="824.5" stroke="#E0E6F1" stroke-width="1"/>
<line x1="1084" x2="1745" y1="877.5" y2="877.5" stroke="#E0E6F1" stroke-width="1"/>
<line x1="1084" x2="1745" y1="931.5" y2="931.5" stroke="#E0E6F1" stroke-width="1"/>
<line x1="1084" x2="1745" y1="984.5" y2="984.5" stroke="#E0E6F1" stroke-width="1"/>
<polygon points="1084.00,1038 1084.00,873.80 1106.03,867.00 1128.07,866.10 1150.10,869.50 1172.13,871.30 1194.17,875.90 1216.20,867.00 1238.23,862.10 1260.27,868.30 1282.30,871.60 1304.33,877.10 1326.37,870.40 1348.40,865.50 1370.43,864.90 1392.47,868.00 1414.50,875.30 1436.53,869.20 1458.57,867.70 1480.60,871.00 1502.63,868.90 1524.67,872.60 1546.70,864.60 1568.73,860.60 1590.77,868.60 1612.80,873.50 1634.83,879.00 1656.87,872.20 1678.90,865.20 1700.93,865.20 1722.97,870.10 1745.00,872.20 1745.00,1038" fill="#5470c6" fill-opacity="0.2"/>
<polygon points="1084.00,1038 1084.00,921.40 1106.03,886.60 1128.07,873.80 1150.10,873.10 1172.13,895.80 1194.17,889.60 1216.20,890.00 1238.23,880.20 1260.27,849.60 1282.30,897.00 1304.33,901.30 1326.37,882.00 1348.40,870.40 1370.43,875.60 1392.47,876.80 1414.50,891.80 1436.53,907.40 1458.57,922.70 1480.60,897.00 1502.63,877.80 1524.67,888.40 1546.70,879.60 1568.73,888.40 1590.77,882.00 1612.80,887.80 1634.83,895.80 1656.87,885.10 1678.90,897.00 1700.93,876.50 1722.97,897.00 1745.00,887.50 1745.00,1038" fill="#91cc75" fill-opacity="0.18"/>
<polyline points="1084.00,873.80 1106.03,867.00 1128.07,866.10 1150.10,869.50 1172.13,871.30 1194.17,875.90 1216.20,867.00 1238.23,862.10 1260.27,868.30 1282.30,871.60 1304.33,877.10 1326.37,870.40 1348.40,865.50 1370.43,864.90 1392.47,868.00 1414.50,875.30 1436.53,869.20 1458.57,867.70 1480.60,871.00 1502.63,868.90 1524.67,872.60 1546.70,864.60 1568.73,860.60 1590.77,868.60 1612.80,873.50 1634.83,879.00 1656.87,872.20 1678.90,865.20 1700.93,865.20 1722.97,870.10 1745.00,872.20" fill="none" stroke="#5470c6" stroke-width="2" stroke-linejoin="bevel"/>
<circle cx="1084.00" cy="873.80" r="2" fill="#fff" stroke="#5470c6" stroke-width="2"/>
<circle cx="1106.03" cy="867.00" r="2" fill="#fff" stroke="#5470c6" stroke-width="2"/>
<circle cx="1128.07" cy="866.10" r="2" fill="#fff" stroke="#5470c6" stroke-width="2"/>
<circle cx="1150.10" cy="869.50" r="2" fill="#fff" stroke="#5470c6" stroke-width="2"/>
<circle cx="1172.13" cy="871.30" r="2" fill="#fff" stroke="#5470c6" stroke-width="2"/>
<circle cx="1194.17" cy="875.90" r="2" fill="#fff" stroke="#5470c6" stroke-width="2"/>
<circle cx="1216.20" cy="867.00" r="2" fill="#fff" stroke="#5470c6" stroke-width="2"/>
<circle cx="1238.23" cy="862.10" r="2" fill="#fff" stroke="#5470c6" stroke-width="2"/>
<circle cx="1260.27" cy="868.30" r="2" fill="#fff" stroke="#5470c6" stroke-width="2"/>
<circle cx="1282.30" cy="871.60" r="2" fill="#fff" stroke="#5470c6" stroke-width="2"/>
<circle cx="1304.33" cy="877.10" r="2" fill="#fff" stroke="#5470c6" stroke-width="2"/>
<circle cx="1326.37" cy="870.40" r="2" fill="#fff" stroke="#5470c6" stroke-width="2"/>
<circle cx="1348.40" cy="865.50" r="2" fill="#fff" stroke="#5470c6" stroke-width="2"/>
<circle cx="1370.43" cy="864.90" r="2" fill="#fff" stroke="#5470c6" stroke-width="2"/>
<circle cx="1392.47" cy="868.00" r="2" fill="#fff" stroke="#5470c6" stroke-width="2"/>
<circle cx="1414.50" cy="875.30" r="2" fill="#fff" stroke="#5470c6" stroke-width="2"/>
<circle cx="1436.53" cy="869.20" r="2" fill="#fff" stroke="#5470c6" stroke-width="2"/>
<circle cx="1458.57" cy="867.70" r="2" fill="#fff" stroke="#5470c6" stroke-width="2"/>
<circle cx="1480.60" cy="871.00" r="2" fill="#fff" stroke="#5470c6" stroke-width="2"/>
<circle cx="1502.63" cy="868.90" r="2" fill="#fff" stroke="#5470c6" stroke-width="2"/>
<circle cx="1524.67" cy="872.60" r="2" fill="#fff" stroke="#5470c6" stroke-width="2"/>
<circle cx="1546.70" cy="864.60" r="2" fill="#fff" stroke="#5470c6" stroke-width="2"/>
<circle cx="1568.73" cy="860.60" r="2" fill="#fff" stroke="#5470c6" stroke-width="2"/>
<circle cx="1590.77" cy="868.60" r="2" fill="#fff" stroke="#5470c6" stroke-width="2"/>
<circle cx="1612.80" cy="873.50" r="2" fill="#fff" stroke="#5470c6" stroke-width="2"/>
<circle cx="1634.83" cy="879.00" r="2" fill="#fff" stroke="#5470c6" stroke-width="2"/>
<circle cx="1656.87" cy="872.20" r="2" fill="#fff" stroke="#5470c6" stroke-width="2"/>
<circle cx="1678.90" cy="865.20" r="2" fill="#fff" stroke="#5470c6" stroke-width="2"/>
<circle cx="1700.93" cy="865.20" r="2" fill="#fff" stroke="#5470c6" stroke-width="2"/>
<circle cx="1722.97" cy="870.10" r="2" fill="#fff" stroke="#5470c6" stroke-width="2"/>
<circle cx="1745.00" cy="872.20" r="2" fill="#fff" stroke="#5470c6" stroke-width="2"/>
<polyline points="1084.00,921.40 1106.03,886.60 1128.07,873.80 1150.10,873.10 1172.13,895.80 1194.17,889.60 1216.20,890.00 1238.23,880.20 1260.27,849.60 1282.30,897.00 1304.33,901.30 1326.37,882.00 1348.40,870.40 1370.43,875.60 1392.47,876.80 1414.50,891.80 1436.53,907.40 1458.57,922.70 1480.60,897.00 1502.63,877.80 1524.67,888.40 1546.70,879.60 1568.73,888.40 1590.77,882.00 1612.80,887.80 1634.83,895.80 1656.87,885.10 1678.90,897.00 1700.93,876.50 1722.97,897.00 1745.00,887.50" fill="none" stroke="#91cc75" stroke-width="2" stroke-linejoin="bevel"/>
<circle cx="1084.00" cy="921.40" r="2" fill="#fff" stroke="#91cc75" stroke-width="2"/>
<circle cx="1106.03" cy="886.60" r="2" fill="#fff" stroke="#91cc75" stroke-width="2"/>
<circle cx="1128.07" cy="873.80" r="2" fill="#fff" stroke="#91cc75" stroke-width="2"/>
<circle cx="1150.10" cy="873.10" r="2" fill="#fff" stroke="#91cc75" stroke-width="2"/>
<circle cx="1172.13" cy="895.80" r="2" fill="#fff" stroke="#91cc75" stroke-width="2"/>
<circle cx="1194.17" cy="889.60" r="2" fill="#fff" stroke="#91cc75" stroke-width="2"/>
<circle cx="1216.20" cy="890.00" r="2" fill="#fff" stroke="#91cc75" stroke-width="2"/>
<circle cx="1238.23" cy="880.20" r="2" fill="#fff" stroke="#91cc75" stroke-width="2"/>
<circle cx="1260.27" cy="849.60" r="2" fill="#fff" stroke="#91cc75" stroke-width="2"/>
<circle cx="1282.30" cy="897.00" r="2" fill="#fff" stroke="#91cc75" stroke-width="2"/>
<circle cx="1304.33" cy="901.30" r="2" fill="#fff" stroke="#91cc75" stroke-width="2"/>
<circle cx="1326.37" cy="882.00" r="2" fill="#fff" stroke="#91cc75" stroke-width="2"/>
<circle cx="1348.40" cy="870.40" r="2" fill="#fff" stroke="#91cc75" stroke-width="2"/>
<circle cx="1370.43" cy="875.60" r="2" fill="#fff" stroke="#91cc75" stroke-width="2"/>
<circle cx="1392.47" cy="876.80" r="2" fill="#fff" stroke="#91cc75" stroke-width="2"/>
<circle cx="1414.50" cy="891.80" r="2" fill="#fff" stroke="#91cc75" stroke-width="2"/>
<circle cx="1436.53" cy="907.40" r="2" fill="#fff" stroke="#91cc75" stroke-width="2"/>
<circle cx="1458.57" cy="922.70" r="2" fill="#fff" stroke="#91cc75" stroke-width="2"/>
<circle cx="1480.60" cy="897.00" r="2" fill="#fff" stroke="#91cc75" stroke-width="2"/>
<circle cx="1502.63" cy="877.80" r="2" fill="#fff" stroke="#91cc75" stroke-width="2"/>
<circle cx="1524.67" cy="888.40" r="2" fill="#fff" stroke="#91cc75" stroke-width="2"/>
<circle cx="1546.70" cy="879.60" r="2" fill="#fff" stroke="#91cc75" stroke-width="2"/>
<circle cx="1568.73" cy="888.40" r="2" fill="#fff" stroke="#91cc75" stroke-width="2"/>
<circle cx="1590.77" cy="882.00" r="2" fill="#fff" stroke="#91cc75" stroke-width="2"/>
<circle cx="1612.80" cy="887.80" r="2" fill="#fff" stroke="#91cc75" stroke-width="2"/>
<circle cx="1634.83" cy="895.80" r="2" fill="#fff" stroke="#91cc75" stroke-width="2"/>
<circle cx="1656.87" cy="885.10" r="2" fill="#fff" stroke="#91cc75" stroke-width="2"/>
<circle cx="1678.90" cy="897.00" r="2" fill="#fff" stroke="#91cc75" stroke-width="2"/>
<circle cx="1700.93" cy="876.50" r="2" fill="#fff" stroke="#91cc75" stroke-width="2"/>
<circle cx="1722.97" cy="897.00" r="2" fill="#fff" stroke="#91cc75" stroke-width="2"/>
<circle cx="1745.00" cy="887.50" r="2" fill="#fff" stroke="#91cc75" stroke-width="2"/>
<line x1="1084" x2="1745" y1="1038.5" y2="1038.5" stroke="#6E7079" stroke-width="1"/>
<line x1="1114.5" x2="1114.5" y1="1038" y2="1043" stroke="#6E7079" stroke-width="1"/>
<line x1="1224.5" x2="1224.5" y1="1038" y2="1043" stroke="#6E7079" stroke-width="1"/>
<line x1="1334.5" x2="1334.5" y1="1038" y2="1043" stroke="#6E7079" stroke-width="1"/>
<line x1="1444.5" x2="1444.5" y1="1038" y2="1043" stroke="#6E7079" stroke-width="1"/>
<line x1="1554.5" x2="1554.5" y1="1038" y2="1043" stroke="#6E7079" stroke-width="1"/>
<line x1="1665.5" x2="1665.5" y1="1038" y2="1043" stroke="#6E7079" stroke-width="1"/>
<line x1="1325.3" x2="1350.3" y1="775.5" y2="775.5" stroke="#5470c6" stroke-width="2"/>
<circle cx="1337.8" cy="775.5" r="5.5" fill="#fff" stroke="#5470c6" stroke-width="2"/>
<line x1="1390.2" x2="1415.2" y1="775.5" y2="775.5" stroke="#91cc75" stroke-width="2"/>
<circle cx="1402.7" cy="775.5" r="5.5" fill="#fff" stroke="#91cc75" stroke-width="2"/>
</svg>

</body></html>
